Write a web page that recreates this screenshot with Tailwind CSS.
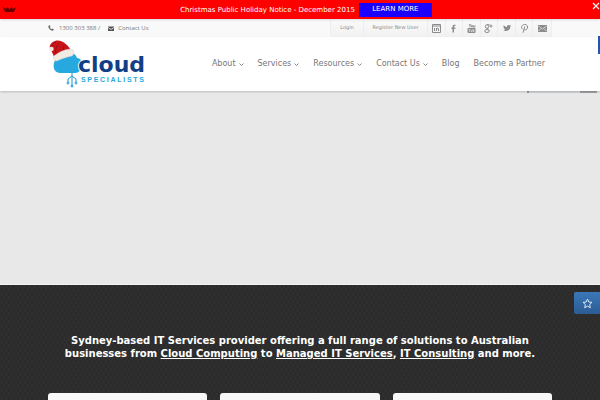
<!DOCTYPE html>
<html lang="en">
<head>
  <meta charset="UTF-8">
  <meta name="viewport" content="width=device-width, initial-scale=1.0">
  <title>Cloud Specialists</title>
  <script src="https://cdn.jsdelivr.net/npm/@tailwindcss/browser@4"></script>
</head>
<body class="relative flex h-screen flex-col overflow-hidden bg-[#e8e8e8] font-['DejaVu_Sans',sans-serif] text-[#777777]">

  <!-- Notice bar -->
  <div class="relative z-20 flex h-[19px] shrink-0 items-center justify-center gap-1 bg-[#ff0000] pl-3 text-[7px] text-white shadow-sm">
    <svg class="absolute left-[3px] top-[6px] h-[7px] w-[13px]" viewBox="0 0 13 7" fill="#6b0000">
      <path d="M0 1l3 2 1-2 2.500 2L9 1l1 2 3-2-2 5H2z"/>
    </svg>
    <span class="pt-px">Christmas Public Holiday Notice - December 2015</span>
    <button type="button" class="h-[14px] w-[73px] bg-[#1c00ff] text-[7px]">LEARN MORE</button>
    <button type="button" aria-label="Close" class="absolute right-0 top-[2px]">
      <svg class="size-2" viewBox="0 0 8 8" stroke="#fff" stroke-width="1.1"><path d="M1 1l6 6M7 1l-6 6"/></svg>
    </button>
  </div>

  <!-- Top bar -->
  <div class="h-[18px] shrink-0 bg-[#f9f9f9] text-[6px]">
    <div class="mx-auto flex h-full w-[84%] items-center justify-between">
      <div class="flex items-center">
        <svg class="mr-[5px] size-[6px]" viewBox="0 0 12 12" fill="#666"><path d="M1 1.500L3.300.5l1.800 3-1.500 1.300c.6 1.500 1.800 2.800 3.500 3.600l1.400-1.500 3 1.700-.9 2.400C6.500 12.600-.5 6.500 1 1.500z"/></svg>
        <span class="font-['Open_Sans','DejaVu_Sans',sans-serif]">1300 303 388 /</span>
        <svg class="ml-2 mr-1 h-[5px] w-[6px]" viewBox="0 0 12 10" fill="#555"><path d="M0 1h12v1.500L6 6 0 2.500zM0 4l6 3.500L12 4v6H0z"/></svg>
        <a href="#" class="font-['Open_Sans','DejaVu_Sans',sans-serif]">Contact Us</a>
      </div>
      <div class="flex h-full items-center divide-x divide-[#eeeeee] border-x border-[#eeeeee] bg-linear-to-b from-[#fafafa] to-[#f1f1f1] text-[#8a8a8a]">
        <a href="#" class="flex h-full w-[33px] items-center justify-center text-[5px]">Login</a>
        <a href="#" class="flex h-full w-[64px] items-center justify-center text-[5px]">Register New User</a>
        <div class="grid h-full w-[123px] grid-cols-7 divide-x divide-[#eeeeee]">
          <a href="#" aria-label="LinkedIn" class="flex items-center justify-center">
            <svg class="size-[9px]" viewBox="0 0 18 18" fill="none" stroke="#8c8c8c" stroke-width="2"><path d="M1 1h16v16H1zM1 4h16M5 8v6M9 14V8M9 10c1-2 4-2 4 0v4"/></svg>
          </a>
          <a href="#" aria-label="Facebook" class="flex items-center justify-center">
            <svg class="size-[9px]" viewBox="0 0 18 18" fill="#8c8c8c"><path d="M7 17V10H5V7h2V5c0-3 2-4 6-3.600V4c-2-.2-3 0-3 1.500V7h3l-.5 3H10v7z"/></svg>
          </a>
          <a href="#" aria-label="YouTube" class="flex items-center justify-center">
            <svg class="size-[9px]" viewBox="0 0 18 18"><rect x="1" y="8" width="16" height="10" rx="2" fill="#8c8c8c"/><path d="M4 0l2 3.500L8 0M6 3v4M9 3v3h2V3H9M13 2.500v4h3v-4" fill="none" stroke="#8c8c8c" stroke-width="1.600"/><path d="M3 11h4M5 11v5M8 12v3h2v-3M12 10v5h2v-3h-2" fill="none" stroke="#f6f6f6" stroke-width="1.100"/></svg>
          </a>
          <a href="#" aria-label="Google Plus" class="flex items-center justify-center">
            <svg class="size-[9px]" viewBox="0 0 18 18" fill="none" stroke="#8c8c8c" stroke-width="2"><circle cx="6" cy="5" r="3.500"/><ellipse cx="6" cy="14" rx="4.500" ry="3"/><path d="M6 1.500h5M7 8.500l2 3M14 1v6M11 4h6"/></svg>
          </a>
          <a href="#" aria-label="Twitter" class="flex items-center justify-center">
            <svg class="size-[8px]" viewBox="0 0 18 18" fill="#8c8c8c"><path d="M1 3c2 2 4 3.500 8 3.500C9 3 12 1 15 3.500L18 3l-1.500 3C16 14 8 18 1 14.500c2 0 3.500-.5 5-1.500-2 0-3-1-3.500-2.500h1.800C2 9.500 1 8 1 6.500l1.500.5C1 6 .5 4.500 1 3z"/></svg>
          </a>
          <a href="#" aria-label="Pinterest" class="flex items-center justify-center">
            <svg class="size-[9px]" viewBox="0 0 18 18" fill="none" stroke="#8c8c8c" stroke-width="2"><path d="M4.500 10C1 5 5 1 9.500 1c5 0 7 4 5 8s-6 3.500-6.500 1M9.500 5L6 17.500"/></svg>
          </a>
          <a href="#" aria-label="Email" class="flex items-center justify-center">
            <svg class="h-[7px] w-[9px]" viewBox="0 0 18 14" fill="#8c8c8c"><path d="M0 0h18v14H0z"/><path d="M1 2l8 6 8-6M1 12l5-5M17 12l-5-5" fill="none" stroke="#f6f6f6" stroke-width="1.300"/></svg>
          </a>
        </div>
      </div>
    </div>
  </div>

  <!-- Header -->
  <header class="z-10 h-[54px] shrink-0 bg-white shadow-[0_1px_2px_rgba(0,0,0,0.2)]">
    <div class="mx-auto flex h-full w-[84%] items-center justify-between">
      <a href="#" aria-label="Cloud Specialists">
        <svg class="h-[50px] w-[98px]" viewBox="0 0 98 50">
          <path d="M12 34C5 34 4 25 8 20c2-4 7-5 10-4 4-3 10-2 11 3 4 0 6 4 4 8 0 4-2 7-6 7z" fill="#27a9e0"/>
          <g fill="none" stroke="#1b9ad6" stroke-width="1"><path d="M24 33v14M20 43v-3l4-3M28 43v-3l-4-3"/><circle cx="20" cy="44" r="1"/><circle cx="28" cy="44" r="1"/><circle cx="24" cy="47" r="1"/></g>
          <path d="M7 20C5 15 3 11 2 9 1 6 4 3 7 2c7-2 13 4 17 11z" fill="#c8131b"/>
          <path d="M8 3C5 4 4 6 3 9M11 5c-3 2-4 6-3 11M16 7c-1 2-1 4 0 7" fill="none" stroke="#9c0d14" stroke-width="1"/>
          <path d="M6 17c5-4 11-7 17-7 3 0 4 5 1 7-6 1-11 3-15 5-3 0-5-3-3-5z" fill="#f1ebe4" stroke="#d8cdc2" stroke-width=".4"/>
          <circle cx="3.500" cy="10" r="2.200" fill="#f1e3dd"/>
          <text x="30" y="33" font-family="DejaVu Sans" font-weight="bold" font-size="22" fill="#123f86" stroke="#fff" stroke-width="2" paint-order="stroke">cloud</text>
          <text x="33" y="43" font-family="Liberation Sans" font-weight="bold" font-size="7" letter-spacing="1.700" fill="#27a9e0">SPECIALISTS</text>
        </svg>
      </a>
      <nav class="flex items-center gap-[14px] pr-[7px] text-[8px]">
        <a href="#" class="flex items-center gap-[3px]">About <svg class="size-[5px]" viewBox="0 0 10 10" fill="none" stroke="#888" stroke-width="2"><path d="M1 3l4 4 4-4"/></svg></a>
        <a href="#" class="flex items-center gap-[3px]">Services <svg class="size-[5px]" viewBox="0 0 10 10" fill="none" stroke="#888" stroke-width="2"><path d="M1 3l4 4 4-4"/></svg></a>
        <a href="#" class="flex items-center gap-[3px]">Resources <svg class="size-[5px]" viewBox="0 0 10 10" fill="none" stroke="#888" stroke-width="2"><path d="M1 3l4 4 4-4"/></svg></a>
        <a href="#" class="flex items-center gap-[3px]">Contact Us <svg class="size-[5px]" viewBox="0 0 10 10" fill="none" stroke="#888" stroke-width="2"><path d="M1 3l4 4 4-4"/></svg></a>
        <a href="#">Blog</a>
        <a href="#">Become a Partner</a>
      </nav>
    </div>
  </header>

  <!-- Slider -->
  <div class="flex h-[194px] shrink-0 items-start justify-end border-b border-[#f4f4f4] pr-[3px]">
    <div class="flex h-[2px] w-[70px] justify-between bg-[#d6d9dc]">
      <span class="w-[2px] bg-[#999999]"></span>
      <span class="w-[17px] bg-[#a0a2a6]"></span>
    </div>
  </div>

  <!-- Intro -->
  <section class="flex min-h-0 flex-1 flex-col bg-[#2f2f2f] bg-[repeating-linear-gradient(60deg,rgba(0,0,0,0.08)_0_1px,transparent_1px_4px),repeating-linear-gradient(120deg,rgba(0,0,0,0.08)_0_1px,transparent_1px_4px)] pt-[49px]">
    <h1 class="text-center text-[10px] font-bold leading-[13px] text-white">
      Sydney-based IT Services provider offering a full range of solutions to Australian<br>
      businesses from <a href="#" class="underline">Cloud Computing</a> to <a href="#" class="underline">Managed IT Services</a>, <a href="#" class="underline">IT Consulting</a> and more.
    </h1>
    <div class="mx-auto mt-[33px] grid w-[84%] flex-1 grid-cols-3 gap-[13px]">
      <div class="rounded-t-[3px] bg-[#f8f8f8]"></div>
      <div class="rounded-t-[3px] bg-[#f8f8f8]"></div>
      <div class="rounded-t-[3px] bg-[#f8f8f8]"></div>
    </div>
  </section>

  <!-- Side tabs -->
  <div class="absolute right-0 top-[36px] z-20 h-[18px] w-[2px] bg-[#1f55b5]"></div>
  <button type="button" aria-label="Favourites" class="absolute right-0 top-[292px] flex h-[22px] w-[26px] items-center justify-center rounded-l-[2px] bg-linear-to-b from-[#3a78b8] to-[#2c5c94]">
    <svg class="size-[11px]" viewBox="0 0 22 22" fill="none" stroke="#dbe7f3" stroke-width="2" stroke-linejoin="round"><path d="M11 2l2.700 6 6.300.7-4.700 4.300 1.300 6.500-5.600-3.200-5.600 3.200L6.700 13 2 8.700 8.300 8z"/></svg>
  </button>
</body>
</html>
